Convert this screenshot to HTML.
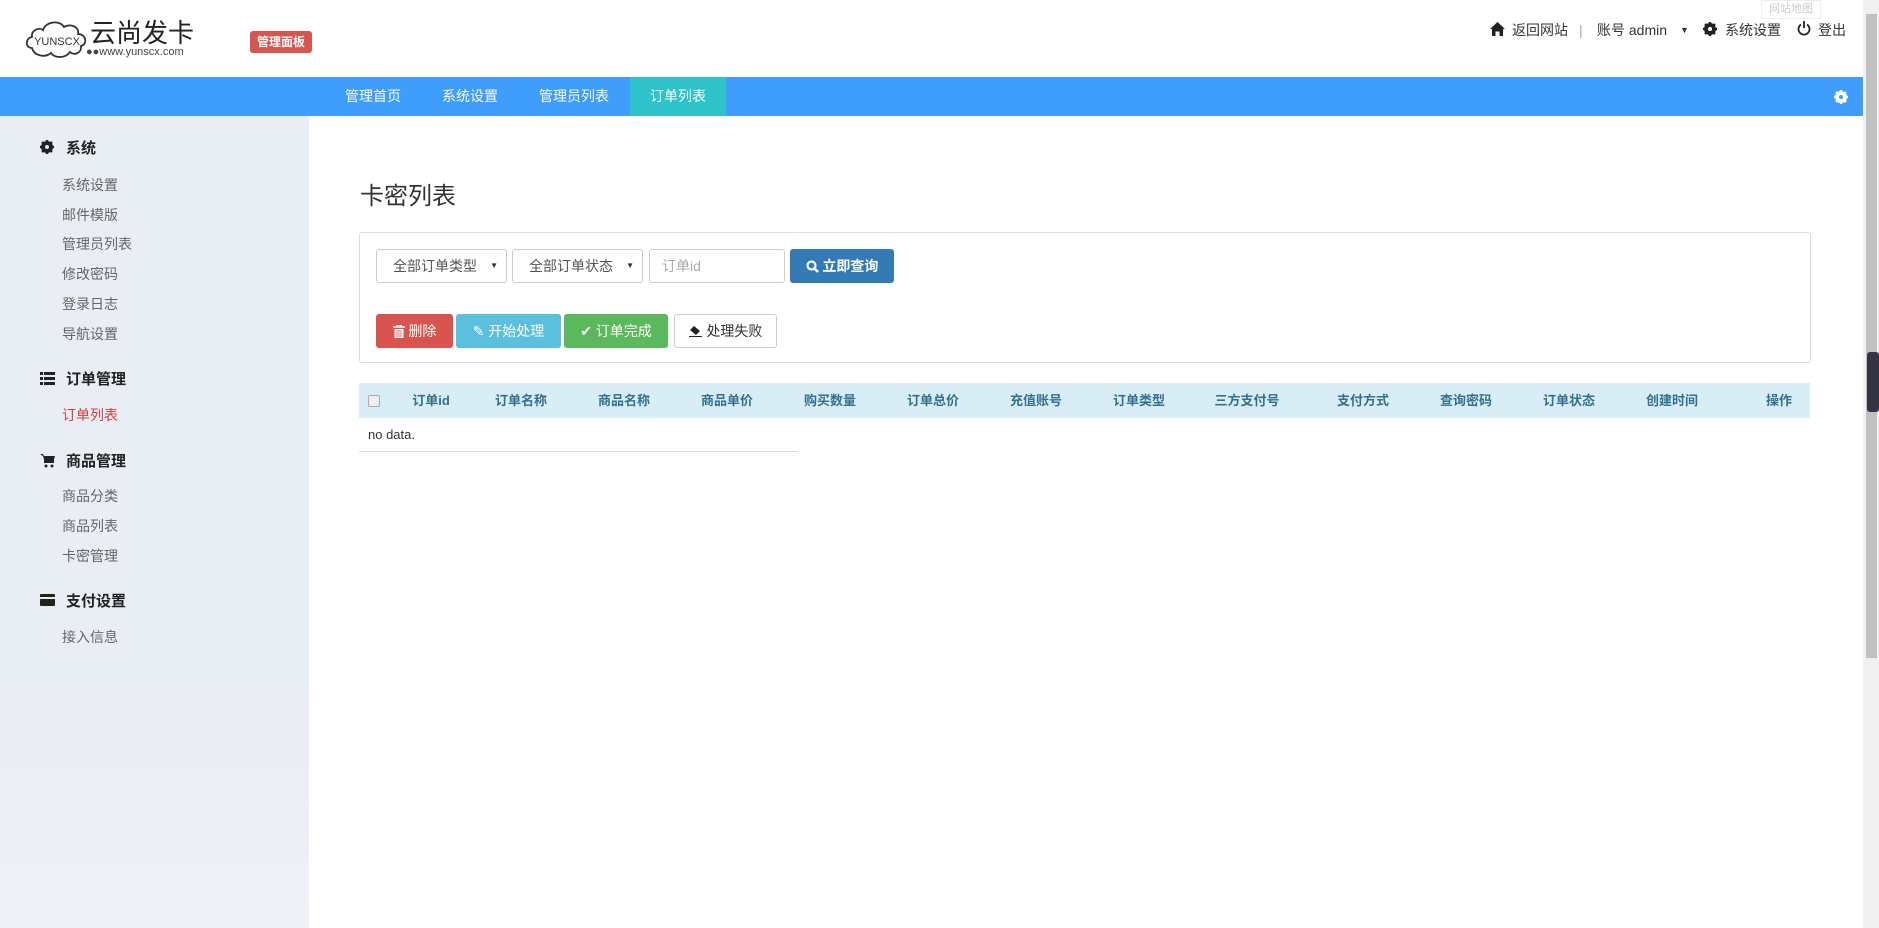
<!DOCTYPE html>
<html><head><meta charset="utf-8"><style>
*{margin:0;padding:0;box-sizing:border-box}
body{width:1879px;height:928px;overflow:hidden;background:#fff;font-family:"Liberation Sans","Noto Sans CJK SC",sans-serif;position:relative;color:#333}
.a{position:absolute;white-space:nowrap}
.nav{position:absolute;left:0;top:77px;width:1863px;height:39px;background:#3f9dfb}
.nav span{position:absolute;top:0;height:39px;line-height:39px;color:#fff;font-size:14px}
.side{position:absolute;left:0;top:116px;width:309px;height:812px;background:linear-gradient(#e9edf4,#e9edf4 70%,#eef1f6)}
.sh{position:absolute;left:66px;font-size:15px;font-weight:bold;color:#222}
.si{position:absolute;left:62px;font-size:14px;color:#666}
.sel{position:absolute;top:249px;height:34px;border:1px solid #ccc;border-radius:3px;font-size:14px;line-height:32px;color:#555;padding-left:16px}
.dd:after{content:"▼";position:absolute;right:8px;font-size:8px;color:#333}
.btn{position:absolute;top:314px;height:34px;border-radius:3px;color:#fff;font-size:14px;line-height:34px;text-align:center}
.th{position:absolute;top:383px;height:35px;line-height:35px;font-size:13px;font-weight:bold;color:#31708f;transform:translateX(-50%)}
.tr{position:absolute;top:20px;font-size:14px;line-height:20px;color:#333}
</style></head><body>
<svg class="a" style="left:24px;top:18px" width="66" height="42" viewBox="0 0 66 42"><path d="M8 30 C1 30 1 20 8 19 C7 12 15 9 19 12 C22 3 36 2 40 9 C46 5 56 9 54 16 C62 16 64 26 57 28 C58 35 50 38 46 34 C41 41 30 40 27 35 C21 40 10 38 8 30 Z" fill="none" stroke="#333" stroke-width="1.8"/><text x="33" y="27" font-size="11" text-anchor="middle" fill="#333" font-family="Liberation Sans">YUNSCX</text></svg>
<div class="a" style="left:90px;top:17px;font-size:26px;line-height:32px;color:#222">云尚发卡</div>
<div class="a" style="left:86px;top:45px;font-size:11px;line-height:14px;color:#444">●●www.yunscx.com</div>
<div class="a" style="left:250px;top:31px;width:62px;height:22px;background:#d9534f;border-radius:3px;color:#fff;font-size:12px;font-weight:bold;line-height:22px;text-align:center">管理面板</div>
<div class="a" style="left:1761px;top:0;width:60px;height:19px;border:1px solid #eee;color:#ccc;font-size:11px;text-align:center;line-height:17px">网站地图</div>
<svg class="a" style="left:1490px;top:22px" width="15" height="14" viewBox="0 0 15 14"><path d="M7.5 0 L15 7 H13 V14 H9.5 V9.5 H5.5 V14 H2 V7 H0 Z" fill="#222"/></svg>
<div class="tr" style="left:1512px">返回网站</div>
<div class="tr" style="left:1579px;color:#aaa">|</div>
<div class="tr" style="left:1597px">账号 admin</div>
<div class="tr" style="left:1680px;font-size:9px">▼</div>
<svg class="a" style="left:1703px;top:22px" width="14" height="14" viewBox="0 0 14 14"><circle cx="7" cy="7" r="4.5" fill="none" stroke="#222" stroke-width="3"/><path d="M7 0V14M0 7H14M2 2L12 12M12 2L2 12" stroke="#222" stroke-width="2.4"/><circle cx="7" cy="7" r="2" fill="#fff"/></svg>
<div class="tr" style="left:1725px">系统设置</div>
<svg class="a" style="left:1797px;top:21px" width="14" height="15" viewBox="0 0 14 15"><path d="M4 3.5 A5.5 5.5 0 1 0 10 3.5" fill="none" stroke="#222" stroke-width="1.8"/><path d="M7 0V7" stroke="#222" stroke-width="1.8"/></svg>
<div class="tr" style="left:1818px">登出</div>
<div class="nav">
<span style="left:345px">管理首页</span><span style="left:442px">系统设置</span><span style="left:539px">管理员列表</span>
<span style="left:630px;width:96px;background:#2ec3c9;text-align:center">订单列表</span>
<svg style="position:absolute;left:1834px;top:13px" width="14" height="14" viewBox="0 0 14 14"><circle cx="7" cy="7" r="4.5" fill="none" stroke="#fff" stroke-width="3"/><path d="M7 0V14M0 7H14M2 2L12 12M12 2L2 12" stroke="#fff" stroke-width="2.4"/><circle cx="7" cy="7" r="2" fill="#3f9dfb"/></svg></div>
<div class="a" style="left:1863px;top:0;width:16px;height:928px;background:#f0f0f0"><div style="position:absolute;left:3px;top:14px;width:11px;height:644px;background:#c1c1c1"></div><div style="position:absolute;left:4px;top:352px;width:12px;height:60px;background:#334;border-radius:3px"></div></div>
<div class="side">
<svg class="a" style="left:40px;top:24px" width="14" height="14" viewBox="0 0 14 14"><circle cx="7" cy="7" r="4.5" fill="none" stroke="#222" stroke-width="3"/><path d="M7 0V14M0 7H14M2 2L12 12M12 2L2 12" stroke="#222" stroke-width="2.4"/><circle cx="7" cy="7" r="2" fill="#e9edf4"/></svg>
<div class="sh" style="top:21px">系统</div>
<div class="si" style="top:59px">系统设置</div><div class="si" style="top:89px">邮件模版</div><div class="si" style="top:118px">管理员列表</div><div class="si" style="top:148px">修改密码</div><div class="si" style="top:178px">登录日志</div><div class="si" style="top:208px">导航设置</div>
<svg class="a" style="left:40px;top:256px" width="15" height="13" viewBox="0 0 15 13"><path d="M0 0h3v3H0zM4 0h11v3H4zM0 5h3v3H0zM4 5h11v3H4zM0 10h3v3H0zM4 10h11v3H4z" fill="#222"/></svg>
<div class="sh" style="top:252px">订单管理</div>
<div class="si" style="top:289px;color:#e03b3b">订单列表</div>
<svg class="a" style="left:40px;top:338px" width="15" height="14" viewBox="0 0 15 14"><path d="M0 0h3l1 2h11l-2 7H5L3 2" fill="#222"/><rect x="4" y="2" width="10" height="7" fill="#222"/><circle cx="6" cy="12" r="1.5" fill="#222"/><circle cx="12" cy="12" r="1.5" fill="#222"/></svg>
<div class="sh" style="top:334px">商品管理</div>
<div class="si" style="top:370px">商品分类</div><div class="si" style="top:400px">商品列表</div><div class="si" style="top:430px">卡密管理</div>
<svg class="a" style="left:40px;top:478px" width="15" height="12" viewBox="0 0 15 12"><rect width="15" height="12" rx="1" fill="#222"/><rect y="3" width="15" height="2" fill="#e9edf4"/></svg>
<div class="sh" style="top:474px">支付设置</div>
<div class="si" style="top:511px">接入信息</div>
</div>
<div class="a" style="left:360px;top:176px;font-size:24px;color:#333">卡密列表</div>
<div class="a" style="left:359px;top:232px;width:1452px;height:131px;border:1px solid #ddd;border-radius:3px"></div>
<div class="sel dd" style="left:376px;width:131px">全部订单类型</div>
<div class="sel dd" style="left:512px;width:131px">全部订单状态</div>
<div class="sel" style="left:649px;width:136px;color:#aaa;padding-left:12px">订单id</div>
<div class="btn" style="left:790px;top:249px;width:104px;background:#337ab7;font-weight:bold"><svg width="13" height="13" viewBox="0 0 13 13" style="vertical-align:-2px"><circle cx="5.5" cy="5.5" r="4" fill="none" stroke="#fff" stroke-width="2.2"/><path d="M8.5 8.5L12 12" stroke="#fff" stroke-width="2.5"/></svg> 立即查询</div>
<div class="btn" style="left:376px;width:77px;background:#d9534f"><svg width="12" height="13" viewBox="0 0 12 13" style="vertical-align:-2px"><path d="M0 2h12M4 2V0h4v2" stroke="#fff" stroke-width="1.5" fill="none"/><path d="M1.5 4h9v9h-9z" fill="#fff"/><path d="M4 5v7M6 5v7M8 5v7" stroke="#d9534f" stroke-width="0.8"/></svg> 删除</div>
<div class="btn" style="left:456px;width:105px;background:#5bc0de">✎ 开始处理</div>
<div class="btn" style="left:564px;width:104px;background:#5cb85c">✔ 订单完成</div>
<div class="btn" style="left:674px;width:103px;background:#fff;border:1px solid #ccc;color:#333;line-height:32px"><svg width="14" height="12" viewBox="0 0 14 12" style="vertical-align:-1px"><path d="M5 1L11 6L7 10L1 5Z" fill="#222"/><path d="M0 11.5H13" stroke="#222"/></svg> 处理失败</div>
<div class="a" style="left:359px;top:383px;width:1451px;height:35px;background:#d9edf7"></div>
<div class="a" style="left:368px;top:395px;width:12px;height:12px;border:1px solid #aaa;background:#eee;border-radius:2px"></div>
<div class="th" style="left:431px">订单id</div><div class="th" style="left:521px">订单名称</div><div class="th" style="left:624px">商品名称</div><div class="th" style="left:727px">商品单价</div><div class="th" style="left:830px">购买数量</div><div class="th" style="left:933px">订单总价</div><div class="th" style="left:1036px">充值账号</div><div class="th" style="left:1139px">订单类型</div><div class="th" style="left:1247px">三方支付号</div><div class="th" style="left:1363px">支付方式</div><div class="th" style="left:1466px">查询密码</div><div class="th" style="left:1569px">订单状态</div><div class="th" style="left:1672px">创建时间</div><div class="th" style="left:1779px">操作</div>
<div class="a" style="left:359px;top:418px;width:439px;height:34px;border-bottom:1px solid #ddd;font-size:13px;line-height:34px;padding-left:9px;color:#333">no data.</div>
</body></html>
